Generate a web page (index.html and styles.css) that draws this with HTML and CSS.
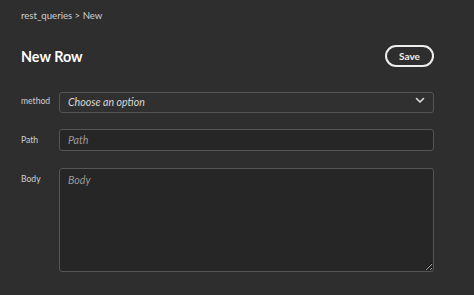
FILE: index.html
```html
<!DOCTYPE html>
<html lang="en">
<head>
    <meta charset="UTF-8">
    <meta name="viewport" content="width=device-width, initial-scale=1.0">
    <title>New Row</title>
    <link rel="stylesheet" href="styles.css">
</head>
<body>
    <div class="page">
        <div class="breadcrumb">rest_queries &gt; New</div>
        <div class="header">
            <h1>New Row</h1>
            <button class="save-btn">Save</button>
        </div>
        <form class="row-form">
            <div class="field">
                <label>method</label>
                <div class="select-wrap">
                    <select>
                        <option>Choose an option</option>
                    </select>
                    <svg class="chevron" width="10" height="7" viewBox="0 0 10 7">
                        <path d="M1.5 1.5 L5 5 L8.5 1.5" fill="none" stroke="#ddd" stroke-width="1.6" stroke-linecap="round" stroke-linejoin="round"/>
                    </svg>
                </div>
            </div>
            <div class="field">
                <label>Path</label>
                <input type="text" placeholder="Path">
            </div>
            <div class="field field-top">
                <label>Body</label>
                <textarea placeholder="Body"></textarea>
            </div>
        </form>
    </div>
</body>
</html>
```

FILE: styles.css
```css
* {
    margin: 0;
    padding: 0;
    box-sizing: border-box;
    font-family: 'Lato', 'Open Sans', sans-serif;
}

body {
    background: #2e2e2e;
    color: #fff;
}

.page {
    padding: 9px 40px 0 21px;
}

.breadcrumb {
    font-size: 9.6px;
    color: #cfcfcf;
    line-height: 13px;
}

.header {
    display: flex;
    justify-content: space-between;
    align-items: center;
    margin-top: 23px;
}

.header h1 {
    font-size: 14.4px;
    font-weight: 700;
    color: #fff;
}

.save-btn {
    background: transparent;
    border: 2px solid #eee;
    border-radius: 12px;
    color: #eee;
    font-size: 10px;
    font-weight: 700;
    width: 49px;
    height: 22px;
}

.row-form {
    margin-top: 23px;
    display: flex;
    flex-direction: column;
}

.field {
    display: flex;
    align-items: center;
    margin-bottom: 16px;
}

.field-top {
    align-items: flex-start;
    margin-top: 1px;
}

.field label {
    width: 38px;
    font-size: 8.6px;
    color: #cfcfcf;
}

.field-top label {
    padding-top: 6px;
}

.select-wrap {
    flex: 1;
    position: relative;
}

select,
input,
textarea {
    width: 100%;
    border: 1px solid #555;
    border-radius: 3px;
    color: #ddd;
    font-size: 10.6px;
    outline: none;
}

select {
    appearance: none;
    background: #303030;
    height: 21px;
    padding: 0 8px;
    font-style: italic;
    color: #d8d8d8;
}

.chevron {
    position: absolute;
    right: 9px;
    top: 7px;
}

input {
    flex: 1;
    height: 22px;
    background: #262626;
    padding: 0 8px;
}

textarea {
    flex: 1;
    height: 104px;
    background: #262626;
    padding: 5px 8px;
    resize: vertical;
}

input::placeholder,
textarea::placeholder {
    color: #9a9a9a;
    font-style: italic;
}
```
